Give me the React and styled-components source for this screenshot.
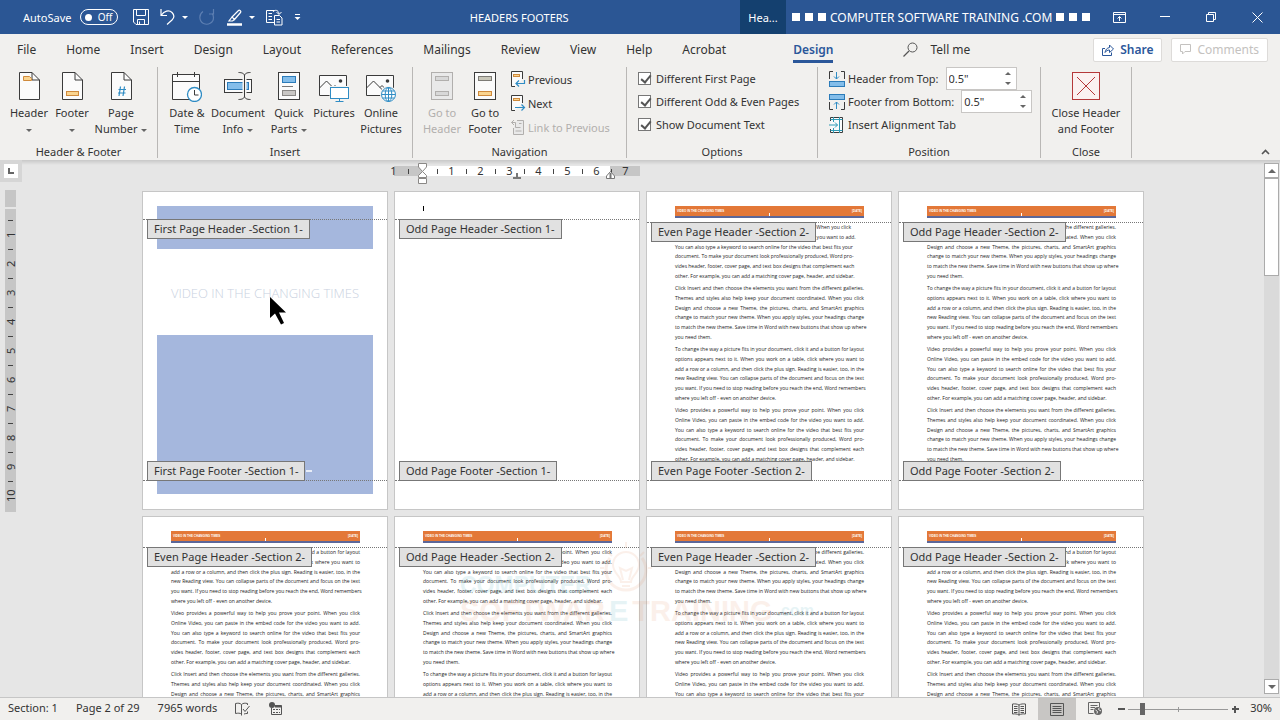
import styled, { createGlobalStyle, css } from 'styled-components';

const VIDEO = [
  'Video provides a powerful way to help you prove your point. When you click',
  'Online Video, you can paste in the embed code for the video you want to add.',
  'You can also type a keyword to search online for the video that best fits your',
  'document. To make your document look professionally produced, Word pro-',
  'vides header, footer, cover page, and text box designs that complement each',
  'other. For example, you can add a matching cover page, header, and sidebar.',
];

const INSERT = [
  'Click Insert and then choose the elements you want from the different galleries.',
  'Themes and styles also help keep your document coordinated. When you click',
  'Design and choose a new Theme, the pictures, charts, and SmartArt graphics',
  'change to match your new theme. When you apply styles, your headings change',
  'to match the new theme. Save time in Word with new buttons that show up where',
  'you need them.',
];

const LAYOUT = [
  'To change the way a picture fits in your document, click it and a button for layout',
  'options appears next to it. When you work on a table, click where you want to',
  'add a row or a column, and then click the plus sign. Reading is easier, too, in the',
  'new Reading view. You can collapse parts of the document and focus on the text',
  'you want. If you need to stop reading before you reach the end, Word remembers',
  'where you left off - even on another device.',
];

const textPages = [
  { kind: 'Even', footer: true, ragged: true, paragraphs: [VIDEO, INSERT, LAYOUT, VIDEO] },
  { kind: 'Odd', footer: true, paragraphs: [INSERT, LAYOUT, VIDEO, INSERT] },
  { kind: 'Even', paragraphs: [LAYOUT, VIDEO, INSERT.slice(0, 3)] },
  { kind: 'Odd', paragraphs: [VIDEO, INSERT, LAYOUT.slice(0, 3)] },
  { kind: 'Even', paragraphs: [INSERT, LAYOUT, VIDEO.slice(0, 3)] },
  { kind: 'Odd', paragraphs: [LAYOUT, VIDEO, INSERT.slice(0, 3)] },
];

const menuTabs = [
  'File',
  'Home',
  'Insert',
  'Design',
  'Layout',
  'References',
  'Mailings',
  'Review',
  'View',
  'Help',
  'Acrobat',
];

/* ---------- icons ---------- */

const Icon = ({ w, h, children, ...rest }) => (
  <svg width={w} height={h} viewBox={`0 0 ${w} ${h}`} fill="none" stroke="#3b3b3b" aria-hidden="true" {...rest}>
    {children}
  </svg>
);

const PageShape = () => (
  <>
    <path d="M.5.5H13L20.5 8V27.5H.5Z" fill="#fbfbfb" />
    <path d="M13 .5V8H20.5" />
  </>
);

const HeaderIcon = () => (
  <Icon w={21} h={28}>
    <PageShape />
    <path d="M4.500 4.500H10.500L12.500 6.500V8.500H4.500Z" fill="#fad48f" stroke="#cf8a3c" />
  </Icon>
);

const FooterIcon = () => (
  <Icon w={21} h={28}>
    <PageShape />
    <rect x="4.500" y="19.500" width="12" height="4" fill="#fad48f" stroke="#cf8a3c" />
  </Icon>
);

const PageNumberIcon = () => (
  <Icon w={21} h={28}>
    <PageShape />
    <path d="M9.500 14.500L8 24M13.500 14.500L12 24M7.500 17.500H15M7 21H14.500" stroke="#2f8cc4" strokeWidth="1.2" />
  </Icon>
);

const DateIcon = () => (
  <Icon w={30} h={30}>
    <path d="M.5 2.500H27.500V27.500H.5Z" fill="#fbfbfb" />
    <path d="M.5 9.500H27.500M5.500 0V5M22.500 0V5" />
    <circle cx="22.500" cy="22.500" r="7" fill="#fff" stroke="#2f8cc4" strokeWidth="1.3" />
    <path d="M22.500 18V23H26.500" />
  </Icon>
);

const DocInfoIcon = () => (
  <Icon w={28} h={28}>
    <rect x=".5" y="7.500" width="27" height="13" fill="#fbfbfb" />
    <rect x="3.500" y="10.500" width="21" height="7" fill="#83bdea" stroke="#2b7bb9" />
    <path d="M20.500 2V26" stroke="#f3f2f0" strokeWidth="4" />
    <path d="M14.500 .5C18 .5 20.500 1.500 20.500 4C20.500 1.500 23 .5 26.500 .5M20.500 4V24M14.500 27.500C18 27.500 20.500 26.500 20.500 24C20.500 26.500 23 27.500 26.500 27.500" />
  </Icon>
);

const QuickPartsIcon = () => (
  <Icon w={22} h={28}>
    <rect x=".5" y=".5" width="21" height="27" fill="#fbfbfb" />
    <rect x="4.500" y="4.500" width="13" height="6" fill="#83bdea" stroke="#2b7bb9" />
    <path d="M4 14.500H15" stroke="#777" />
    <rect x="4.500" y="18.500" width="13" height="5" fill="#c9c7c5" stroke="#8a8886" />
  </Icon>
);

const PhotoFrame = () => (
  <>
    <path d="M.5 3.500H27.500V23.500H.5Z" fill="#fbfbfb" />
    <path d="M.5 16L7.500 9L17 18.500M14 15.500L16 13.500L20 17.500" />
    <circle cx="21.500" cy="9" r="1.800" fill="#3b3b3b" stroke="none" />
  </>
);

const PicturesIcon = () => (
  <Icon w={30} h={30}>
    <PhotoFrame />
    <path d="M10.500 14H31V30H10.500Z" fill="#f3f2f0" stroke="none" />
    <rect x="11.500" y="15.500" width="18" height="11" fill="#fff" stroke="#2f8cc4" />
    <path d="M20.500 26.500V29.500M16.500 29.500H24.500" stroke="#2f8cc4" />
  </Icon>
);

const OnlinePicturesIcon = () => (
  <Icon w={30} h={30}>
    <PhotoFrame />
    <circle cx="22.500" cy="22.500" r="8.500" fill="#f3f2f0" stroke="none" />
    <g stroke="#2f8cc4">
      <circle cx="22.500" cy="22.500" r="7" fill="#fff" />
      <ellipse cx="22.500" cy="22.500" rx="3.300" ry="7" />
      <path d="M22.500 15.500V29.500M15.500 22.500H29.500M16.500 19H28.500M16.500 26H28.500" />
    </g>
  </Icon>
);

const GoToIcon = ({ disabled }) => (
  <Icon w={22} h={28} stroke={disabled ? '#b1afad' : '#3b3b3b'}>
    <rect x=".5" y=".5" width="21" height="27" fill={disabled ? '#e9e9e9' : '#fbfbfb'} />
    <rect x="4.500" y="4.500" width="13" height="4" fill={disabled ? '#d8d8d8' : '#c9c7b9'} stroke={disabled ? '#b1afad' : '#7d7b76'} />
    <rect x="4.500" y="19.500" width="13" height="4" fill={disabled ? '#d8d8d8' : '#fad48f'} stroke={disabled ? '#b1afad' : '#cf8a3c'} />
  </Icon>
);

const PreviousIcon = () => (
  <Icon w={15} h={17}>
    <path d="M4 15.500H.5V.5H11.500V8" fill="#fbfbfb" />
    <rect x="2.500" y="3.500" width="6" height="2" fill="#fad48f" stroke="#cf8a3c" />
    <path d="M13.500 9V12.500H5M8 9.500L5 12.500L8 15.500" stroke="#2f8cc4" strokeWidth="1.200" />
  </Icon>
);

const NextIcon = () => (
  <Icon w={15} h={17}>
    <path d="M4 15.500H.5V.5H11.500V8" fill="#fbfbfb" />
    <rect x="2.500" y="3.500" width="6" height="2" fill="#fad48f" stroke="#cf8a3c" />
    <path d="M4 12.500H13.500M10.500 9.500L13.500 12.500L10.500 15.500" stroke="#2f8cc4" strokeWidth="1.200" />
  </Icon>
);

const LinkIcon = () => (
  <Icon w={15} h={17} stroke="#b1afad">
    <path d="M6 1.500H12.500V15.500H2.500V9" fill="#e9e9e9" />
    <path d="M4.500 12H10.500M9.500 8.500H4.500V3.500H.5M3 1L.5 3.500L3 6M8 4.500H10.500" />
  </Icon>
);

const FromTopIcon = () => (
  <Icon w={16} h={16}>
    <path d="M.5 8V.5H4M12 .5H15.500V8" />
    <rect x=".5" y="10.500" width="15" height="5" fill="#83bdea" stroke="#2b7bb9" />
    <path d="M7.500 1V8M5 5.500L7.500 8L10 5.500" stroke="#2f8cc4" />
  </Icon>
);

const FromBottomIcon = () => (
  <Icon w={16} h={16}>
    <path d="M.5 8V15.500H4M12 15.500H15.500V8" />
    <rect x=".5" y=".5" width="15" height="5" fill="#83bdea" stroke="#2b7bb9" />
    <path d="M7.500 15V8M5 10.500L7.500 8L10 10.500" stroke="#2f8cc4" />
  </Icon>
);

const AlignTabIcon = () => (
  <Icon w={16} h={16}>
    <path d="M1.500 4V.5H13.500V15.500H1.500V12" fill="#fbfbfb" />
    <path d="M4.500 0V5M4.500 11V16M10.500 0V16M1.500 2.500H13.500M1.500 13.500H13.500M0 8H8.500M6 5.500L8.500 8L6 10.500" stroke="#2f9bb5" />
  </Icon>
);

const CloseRedIcon = () => (
  <Icon w={28} h={28} stroke="#b5383a">
    <rect x=".5" y=".5" width="27" height="27" fill="#fbf1f1" />
    <path d="M5 5L23 23M23 5L5 23" />
  </Icon>
);

const SaveIcon = () => (
  <Icon w={16} h={16} stroke="#fff">
    <path d="M.5.5H15.500V15.500H3L.5 13ZM3.500 .5V6.500H12.500V.5M4.500 15.500V10.500H11.500V15.500M6.500 12.500V15" />
  </Icon>
);

const UndoIcon = () => (
  <Icon w={16} h={16} stroke="#fff" strokeWidth="1.200">
    <path d="M1 0V6.500H7M1.500 6C4 2 9 .5 12 3.500C14.500 6 14 9 12 11L7 15.500" />
  </Icon>
);

const RedoIcon = () => (
  <Icon w={16} h={16} stroke="#5d7fb2" strokeWidth="1.200">
    <path d="M14.500 0V5H10M4 2.500C-.5 5.500 0 12 4.500 14.500C9 16.500 14.500 14 14.500 8.500C14.500 7 14 5.500 13 4.500" />
  </Icon>
);

const PenIcon = () => (
  <Icon w={17} h={17} stroke="#fff">
    <path d="M6 8L12.500 1.500C13.500 .5 15.500 2.500 14.500 3.500L8.500 10.500ZM6 8L3 12H6.500L8.500 10.500" strokeWidth="1.200" />
    <path d="M1 15.500H16" strokeWidth="2.500" />
  </Icon>
);

const CompareIcon = () => (
  <Icon w={17} h={17} stroke="#fff">
    <path d="M8 13.500H.5V1.500H8.500M2.500 4.500H6M2.500 7.500H6M2.500 10.500H6" />
    <path d="M8.500 6.500H13.500L16 9V16H8.500ZM10.500 10.500H14M10.500 13H14" />
    <path d="M7 3C8.500 .5 12.500 .5 13 5M10.500 3L13 5.500L15.500 3" />
  </Icon>
);

const CustomizeIcon = () => (
  <Icon w={7} h={8} stroke="#fff">
    <path d="M1 1.500H6" />
    <path d="M.5 4H6.500L3.500 7Z" fill="#fff" stroke="none" />
  </Icon>
);

const RibbonModeIcon = () => (
  <Icon w={13} h={11} stroke="#fff">
    <path d="M.5.5H12.500V10.500H.5ZM.5 2.500H12.500M6.500 9V4.500M4.500 6.500L6.500 4.500L8.500 6.500" />
  </Icon>
);

const MinimizeIcon = () => (
  <Icon w={10} h={10} stroke="#fff">
    <path d="M0 4.500H10" />
  </Icon>
);

const RestoreIcon = () => (
  <Icon w={10} h={10} stroke="#fff">
    <path d="M.5 2.500H7.500V9.500H.5ZM2.500 2.500V.5H9.500V7.500H7.500" />
  </Icon>
);

const CloseIcon = () => (
  <Icon w={11} h={11} stroke="#fff">
    <path d="M.5.5L10.500 10.500M10.500 .5L.5 10.500" />
  </Icon>
);

const SearchIcon = () => (
  <Icon w={15} h={15} stroke="#555">
    <circle cx="9.500" cy="5.500" r="4.500" />
    <path d="M6 9L.5 14.500" strokeWidth="1.200" />
  </Icon>
);

const ShareIcon = () => (
  <Icon w={12} h={12} stroke="#2b579a">
    <path d="M3 4.500H.5V11.500H9.500V8.500M3 8.500C3.500 5.500 5 4 7.500 3.500V1L11.500 5L7.500 8.500V6C5.500 6 4 7 3 8.500Z" />
  </Icon>
);

const CommentIcon = () => (
  <Icon w={11} h={11} stroke="#c4c2c0">
    <path d="M.5.5H10.500V7.500H5L2.500 10V7.500H.5Z" />
  </Icon>
);

const CollapseIcon = () => (
  <Icon w={9} h={6} stroke="#555">
    <path d="M1 5L4.500 1.500L8 5" strokeWidth="1.600" />
  </Icon>
);

const CursorIcon = () => (
  <Icon w={17} h={28} stroke="none">
    <path d="M0 0V21L5 16.500L11 27.500L14 26L9 15.500H16Z" fill="#000" />
  </Icon>
);

const IndentIcon = () => (
  <Icon w={9} h={22} stroke="#8a8886">
    <path d="M.5.5H8.500V4L4.500 8.500L.5 4ZM.5 14.500V12.500L4.500 8.500L8.500 12.500V14.500ZM.5 15.500H8.500V20.500H.5Z" fill="#fff" />
  </Icon>
);

const RightIndentIcon = () => (
  <Icon w={9} h={9} stroke="#777">
    <path d="M.5 7.500V5L4.500 .5L8.500 5V7.500Z" fill="#fff" />
    <path d="M4.500 2V8" strokeWidth="2" />
  </Icon>
);

const CenterTabIcon = () => (
  <Icon w={8} h={6} stroke="#777">
    <path d="M0 5H8M4 0V5" strokeWidth="2" />
  </Icon>
);

const ProofIcon = () => (
  <Icon w={16} h={14} stroke="#555">
    <path d="M6.500 12C5 11 3 11 .5 11.500V1.500C3 1 5 1 6.500 2.500V13.500M6.500 2.500C8 1 10 1 12.500 1.500V3M9 12C10 11.500 11.500 11.500 12.500 11.500V9.500M8 7L10 9.500L14.500 4" />
  </Icon>
);

const MacroIcon = () => (
  <Icon w={14} h={14} stroke="#555">
    <path d="M2.500 6V12.500H12.500V3.500H6" />
    <path d="M6 4.500H12.500" strokeWidth="2" />
    <path d="M4 7.500H11M4 10.500H11" strokeDasharray="2 1" />
    <circle cx="3" cy="3" r="3" fill="#555" stroke="none" />
  </Icon>
);

const ReadIcon = () => (
  <Icon w={14} h={13} stroke="#555">
    <path d="M7 2V12.500M7 2C5 .8 3 .8 .5 1V11C3 10.800 5 10.800 7 12C9 10.800 11 10.800 13.500 11V1C11 .8 9 .8 7 2ZM2 3.500H5.500M2 5.500H5.500M2 7.500H5.500M2 9.500H5.500M8.500 3.500H12M8.500 5.500H12M8.500 7.500H12M8.500 9.500H12" />
  </Icon>
);

const PrintIcon = () => (
  <Icon w={14} h={13} stroke="#555">
    <path d="M.5.5H13.500V12.500H.5ZM2.500 3.500H11.500M2.500 5.500H11.500M2.500 7.500H11.500M2.500 9.500H11.500" />
  </Icon>
);

const WebIcon = () => (
  <Icon w={15} h={14} stroke="#666">
    <path d="M5.500 11.500H.5V.5H11.500V5M2.500 3.500H9.500M2.500 5.500H7M2.500 7.500H5.500" />
    <circle cx="10" cy="9" r="4" fill="#666" stroke="none" />
    <path d="M7.500 8L9.500 9.500L9 11.500M11 6L10.500 7.500L13 9" stroke="#f1f0ee" />
  </Icon>
);

const BulbMark = () => (
  <Icon w={56} h={62} stroke="#e58a5c">
    <path d="M12 16A20 20 0 1 0 44 16" strokeWidth="3" />
    <path d="M23 40C23 34 15 31 15 23A13 13 0 0 1 41 23C41 31 33 34 33 40ZM28 6V0M10 10L14 14M46 10L42 14M2 26H6M50 26H54M25 38L22 26L28 29L34 26L31 38M24 44H32" strokeWidth="2" />
  </Icon>
);

/* ---------- page ---------- */

const TextPage = ({ kind, footer, ragged, paragraphs }) => (
  <Sheet>
    <Band>
      <span>VIDEO IN THE CHANGING TIMES</span>
      <span>[DATE]</span>
    </Band>
    <DocBody>
      {paragraphs.map((lines, i) => (
        <Paragraph key={i} $ragged={ragged && i === 0}>
          {lines.map((line, n) => (
            <Line key={line} $last={n === 5}>{line}</Line>
          ))}
        </Paragraph>
      ))}
    </DocBody>
    <HeaderMark $section={2}>
      <MarkLabel>{kind} Page Header -Section 2-</MarkLabel>
    </HeaderMark>
    {footer && (
      <FooterMark>
        <MarkLabel>{kind} Page Footer -Section 2-</MarkLabel>
      </FooterMark>
    )}
  </Sheet>
);

const BigButton = ({ icon, lines, arrow, w, disabled }) => (
  <StyledBigButton $w={w} disabled={disabled}>
    <BigIcon>{icon}</BigIcon>
    <span>{lines[0]}</span>
    <span>
      {lines[1]}
      {arrow && <Caret $spaced={!!lines[1]} />}
    </span>
  </StyledBigButton>
);

const Spin = ({ id, label, icon }) => (
  <FieldRow>
    {icon}
    <label htmlFor={id}>{label}</label>
    <SpinBox>
      <input id={id} defaultValue={'0.5"'} />
      <SpinButtons>
        <button aria-label={`Increase ${label}`}>
          <Caret $up />
        </button>
        <button aria-label={`Decrease ${label}`}>
          <Caret />
        </button>
      </SpinButtons>
    </SpinBox>
  </FieldRow>
);

function App() {
  return (
    <Window>
      <GlobalStyle />
      <TitleBar>
        <QuickAccess>
          <span>AutoSave</span>
          <Toggle role="switch" aria-checked="false" aria-label="AutoSave">
            <i />
            Off
          </Toggle>
          <QuickButton aria-label="Save"><SaveIcon /></QuickButton>
          <QuickButton aria-label="Undo"><UndoIcon /><Caret $light /></QuickButton>
          <QuickButton aria-label="Redo"><RedoIcon /></QuickButton>
          <QuickButton aria-label="Highlight"><PenIcon /><Caret $light /></QuickButton>
          <QuickButton aria-label="Compare"><CompareIcon /></QuickButton>
          <QuickButton aria-label="Customize"><CustomizeIcon /></QuickButton>
        </QuickAccess>
        <DocTitle>HEADERS FOOTERS</DocTitle>
        <ContextTab>Hea...</ContextTab>
        <Account>
          <Squares><i /><i /><i /></Squares>
          COMPUTER SOFTWARE TRAINING .COM
          <Squares><i /><i /><i /></Squares>
        </Account>
        <WindowButton aria-label="Ribbon display options"><RibbonModeIcon /></WindowButton>
        <WindowButton aria-label="Minimize"><MinimizeIcon /></WindowButton>
        <WindowButton aria-label="Restore"><RestoreIcon /></WindowButton>
        <WindowButton aria-label="Close"><CloseIcon /></WindowButton>
      </TitleBar>

      <TabBar>
        <Tabs>
          {menuTabs.map((tab) => (
            <Tab key={tab}>{tab}</Tab>
          ))}
        </Tabs>
        <Tab $active>Design</Tab>
        <TellMe>
          <SearchIcon />
          Tell me
        </TellMe>
        <TabActions>
          <ActionButton>
            <ShareIcon />
            Share
          </ActionButton>
          <ActionButton disabled>
            <CommentIcon />
            Comments
          </ActionButton>
        </TabActions>
      </TabBar>

      <Ribbon>
        <Group $w={158}>
          <Tools $pad={8}>
            <BigButton w={42} icon={<HeaderIcon />} lines={['Header']} arrow />
            <BigButton w={44} icon={<FooterIcon />} lines={['Footer']} arrow />
            <BigButton w={54} icon={<PageNumberIcon />} lines={['Page', 'Number']} arrow />
          </Tools>
          <GroupName>Header &amp; Footer</GroupName>
        </Group>
        <Group $w={255}>
          <Tools $pad={6}>
            <BigButton w={46} icon={<DateIcon />} lines={['Date &', 'Time']} />
            <BigButton w={56} icon={<DocInfoIcon />} lines={['Document', 'Info']} arrow />
            <BigButton w={46} icon={<QuickPartsIcon />} lines={['Quick', 'Parts']} arrow />
            <BigButton w={44} icon={<PicturesIcon />} lines={['Pictures']} />
            <BigButton w={50} icon={<OnlinePicturesIcon />} lines={['Online', 'Pictures']} />
          </Tools>
          <GroupName>Insert</GroupName>
        </Group>
        <Group $w={214}>
          <Tools $pad={8}>
            <BigButton w={42} icon={<GoToIcon disabled />} lines={['Go to', 'Header']} disabled />
            <BigButton w={44} icon={<GoToIcon />} lines={['Go to', 'Footer']} />
            <NavList>
              <SmallButton><PreviousIcon />Previous</SmallButton>
              <SmallButton><NextIcon />Next</SmallButton>
              <SmallButton disabled><LinkIcon />Link to Previous</SmallButton>
            </NavList>
          </Tools>
          <GroupName>Navigation</GroupName>
        </Group>
        <Group $w={191}>
          <Tools $pad={11}>
            <FieldList>
              <CheckRow><input type="checkbox" defaultChecked />Different First Page</CheckRow>
              <CheckRow><input type="checkbox" defaultChecked />Different Odd &amp; Even Pages</CheckRow>
              <CheckRow><input type="checkbox" defaultChecked />Show Document Text</CheckRow>
            </FieldList>
          </Tools>
          <GroupName>Options</GroupName>
        </Group>
        <Group $w={223}>
          <Tools $pad={11}>
            <FieldList>
              <Spin id="from-top" label="Header from Top:" icon={<FromTopIcon />} />
              <Spin id="from-bottom" label="Footer from Bottom:" icon={<FromBottomIcon />} />
              <FieldButton><AlignTabIcon />Insert Alignment Tab</FieldButton>
            </FieldList>
          </Tools>
          <GroupName>Position</GroupName>
        </Group>
        <Group $w={91}>
          <Tools $pad={4}>
            <BigButton w={82} icon={<CloseRedIcon />} lines={['Close Header', 'and Footer']} />
          </Tools>
          <GroupName>Close</GroupName>
        </Group>
        <Collapse aria-label="Collapse ribbon"><CollapseIcon /></Collapse>
      </Ribbon>

      <Workspace>
        <LeftRail>
          <TabSelector aria-label="Tab selector"><i /></TabSelector>
          <VRuler>
            <VMargin />
            {[1, 2, 3, 4, 5, 6, 7, 8, 9, 10].map((n) => (
              <VCell key={n}>{n}</VCell>
            ))}
          </VRuler>
        </LeftRail>
        <Canvas>
          <PagesWrap>
            <HRuler>
              {['1', '', '1', '2', '3', '4', '5', '6', '7'].map((n, i) => (
                <HCell key={i} $first={i === 0}>{n}</HCell>
              ))}
              <Marker $x={40} $y={-3}><IndentIcon /></Marker>
              <Marker $x={135} $y={7}><CenterTabIcon /></Marker>
              <Marker $x={228} $y={5}><RightIndentIcon /></Marker>
            </HRuler>
            <Pages>
              <Sheet>
                <Cover>
                  <CoverTop />
                  <CoverTitle>VIDEO IN THE CHANGING TIMES</CoverTitle>
                  <CoverBottom><i /></CoverBottom>
                </Cover>
                <HeaderMark>
                  <MarkLabel>First Page Header -Section 1-</MarkLabel>
                </HeaderMark>
                <FooterMark>
                  <MarkLabel>First Page Footer -Section 1-</MarkLabel>
                </FooterMark>
                <Pointer><CursorIcon /></Pointer>
              </Sheet>
              <Sheet>
                <TextCaret />
                <HeaderMark>
                  <MarkLabel>Odd Page Header -Section 1-</MarkLabel>
                </HeaderMark>
                <FooterMark>
                  <MarkLabel>Odd Page Footer -Section 1-</MarkLabel>
                </FooterMark>
              </Sheet>
              {textPages.map((page, i) => (
                <TextPage key={i} {...page} />
              ))}
            </Pages>
            <Watermark>
              <MarkTop>COMPUTER</MarkTop>
              <MarkRow>
                <span>SOFTWAR</span>
                <b>E</b>
                <span>TRAINING</span>
                <em>.com</em>
              </MarkRow>
              <Bulb><BulbMark /></Bulb>
            </Watermark>
          </PagesWrap>
        </Canvas>
        <ScrollBar>
          <ScrollButton aria-label="Scroll up"><Caret $up $big /></ScrollButton>
          <Thumb />
          <ScrollButton aria-label="Scroll down"><Caret $big /></ScrollButton>
        </ScrollBar>
      </Workspace>

      <StatusBar>
        <StatusText>Section: 1</StatusText>
        <StatusText>Page 2 of 29</StatusText>
        <StatusText>7965 words</StatusText>
        <ProofIcon />
        <MacroIcon />
        <StatusRight>
          <ViewButton aria-label="Read mode"><ReadIcon /></ViewButton>
          <ViewButton $active aria-label="Print layout"><PrintIcon /></ViewButton>
          <ViewButton aria-label="Web layout"><WebIcon /></ViewButton>
          <ZoomStep aria-label="Zoom out" />
          <ZoomSlider type="range" aria-label="Zoom" min="10" max="190" defaultValue="32" />
          <ZoomStep $plus aria-label="Zoom in" />
          <ZoomValue>30%</ZoomValue>
        </StatusRight>
      </StatusBar>
    </Window>
  );
}

export default App;

const GlobalStyle = createGlobalStyle`
  * {
    box-sizing: border-box;
  }

  body {
    margin: 0;
    overflow: hidden;
  }

  body, button, input {
    font-family: 'Noto Sans', 'Open Sans', sans-serif;
    font-size: 11px;
    color: #333;
  }

  button {
    margin: 0;
    padding: 0;
    border: none;
    background: none;
  }

  svg {
    display: block;
    flex-shrink: 0;
  }
`;

const Window = styled.div`
  height: 100vh;
  display: flex;
  flex-direction: column;
  background-color: #e6e6e6;
  white-space: nowrap;
`;

const TitleBar = styled.header`
  height: 34px;
  display: flex;
  align-items: center;
  background-color: #2b5694;
  color: #fff;
`;

const QuickAccess = styled.div`
  padding-left: 23px;
  display: flex;
  align-items: center;
`;

const Toggle = styled.button`
  width: 38px;
  height: 16px;
  margin: 0 15px 0 9px;
  padding: 0 5px 0 4px;
  display: flex;
  align-items: center;
  justify-content: space-between;
  border: 1px solid #fff;
  border-radius: 8px;
  color: #fff;
  font-size: 10px;

  i {
    width: 7px;
    height: 7px;
    border-radius: 50%;
    background-color: #fff;
  }
`;

const QuickButton = styled.button`
  margin-right: 11px;
  display: flex;
  align-items: center;
  gap: 6px;
`;

const Caret = styled.i`
  width: 0;
  height: 0;
  display: inline-block;
  vertical-align: middle;
  border: ${({ $big }) => ($big ? 4 : 3)}px solid transparent;
  border-top-color: ${({ $light }) => ($light ? '#fff' : '#666')};
  border-bottom-width: 0;
  margin-left: ${({ $spaced }) => ($spaced ? 4 : 0)}px;

  ${({ $up }) =>
    $up &&
    css`
      transform: rotate(180deg);
    `}
`;

const DocTitle = styled.div`
  flex: 1;
  padding-right: 14px;
  text-align: center;
`;

const ContextTab = styled.div`
  width: 46px;
  height: 100%;
  display: flex;
  align-items: center;
  justify-content: center;
  background-color: #14406f;
`;

const Account = styled.div`
  width: 310px;
  padding-left: 6px;
  display: flex;
  align-items: center;
  gap: 4px;
  font-size: 12px;
`;

const Squares = styled.span`
  display: flex;
  gap: 5px;

  i {
    width: 8px;
    height: 8px;
    background-color: #fff;
  }
`;

const WindowButton = styled.button`
  width: 46px;
  height: 100%;
  display: flex;
  align-items: center;
  justify-content: center;
`;

const TabBar = styled.nav`
  height: 31px;
  padding: 0 12px 0 17px;
  display: flex;
  align-items: center;
  background-color: #f1f0ee;
`;

const Tabs = styled.div`
  display: flex;
  gap: 30px;
  margin-right: 67px;
`;

const Tab = styled.button`
  height: 26px;
  padding-top: 2px;
  font-size: 12px;
  border-bottom: 3px solid transparent;

  ${({ $active }) =>
    $active &&
    css`
      color: #2b579a;
      font-weight: 600;
      border-bottom-color: #2b579a;
    `}
`;

const TellMe = styled.button`
  margin-left: 70px;
  display: flex;
  align-items: center;
  gap: 12px;
  font-size: 12px;
`;

const TabActions = styled.div`
  margin-left: auto;
  display: flex;
  gap: 9px;
`;

const ActionButton = styled.button`
  height: 24px;
  padding: 0 8px;
  display: flex;
  align-items: center;
  gap: 6px;
  border: 1px solid #dddbd9;
  border-radius: 2px;
  background-color: #fff;
  color: #2b579a;
  font-size: 12px;
  font-weight: 600;

  &:disabled {
    color: #c4c2c0;
    font-weight: 400;
  }
`;

const Ribbon = styled.section`
  height: 95px;
  display: flex;
  align-items: flex-start;
  background-color: #f1f0ee;
`;

const Group = styled.div`
  width: ${({ $w }) => $w}px;
  height: 91px;
  margin-top: 2px;
  display: flex;
  flex-direction: column;
  justify-content: space-between;
  border-right: 1px solid #b9b7b5;
`;

const Tools = styled.div`
  padding-left: ${({ $pad }) => $pad}px;
  display: flex;
`;

const GroupName = styled.div`
  line-height: 12px;
  text-align: center;
`;

const StyledBigButton = styled.button`
  width: ${({ $w }) => $w}px;
  padding-top: 5px;
  display: flex;
  flex-direction: column;
  align-items: center;
  line-height: 16px;

  &:disabled {
    color: #b1afad;
  }
`;

const BigIcon = styled.span`
  height: 33px;
`;

const NavList = styled.div`
  margin-left: 4px;
`;

const SmallButton = styled.button`
  height: 24px;
  display: flex;
  align-items: center;
  gap: 2px;

  &:disabled {
    color: #b1afad;
  }
`;

const FieldList = styled.div`
  display: flex;
  flex-direction: column;
  align-items: flex-start;
`;

const fieldRow = css`
  height: 23px;
  display: flex;
  align-items: center;
  gap: 3px;
`;

const FieldRow = styled.div`
  ${fieldRow}
`;

const FieldButton = styled.button`
  ${fieldRow}
`;

const CheckRow = styled.label`
  ${fieldRow}
  gap: 5px;

  input {
    appearance: none;
    position: relative;
    width: 13px;
    height: 13px;
    margin: 0;
    border: 1px solid #777;
    background-color: #fff;
  }

  input:checked::after {
    content: '';
    position: absolute;
    left: 4px;
    top: 0;
    width: 4px;
    height: 8px;
    border: solid #555;
    border-width: 0 2px 2px 0;
    transform: rotate(40deg);
  }
`;

const SpinBox = styled.div`
  width: 71px;
  height: 23px;
  margin-left: 4px;
  display: flex;
  border: 1px solid #c8c6c4;
  background-color: #fff;

  input {
    flex: 1;
    min-width: 0;
    padding: 0 2px;
    border: none;
    outline: none;
    background: none;
  }
`;

const SpinButtons = styled.div`
  width: 16px;
  display: flex;
  flex-direction: column;

  button {
    flex: 1;
    display: flex;
    align-items: center;
    justify-content: center;
  }
`;

const Collapse = styled.button`
  align-self: flex-end;
  margin: 0 10px 5px auto;
`;

const Workspace = styled.main`
  flex: 1;
  min-height: 0;
  display: flex;
  overflow: hidden;
  background: linear-gradient(#c8c8c8, #e6e6e6 5px);
`;

const LeftRail = styled.div`
  width: 22px;
  display: flex;
  flex-direction: column;
  gap: 8px;
`;

const TabSelector = styled.button`
  width: 22px;
  height: 22px;
  border: 4px solid #d6d6d6;
  background-color: #fff;
  display: flex;
  align-items: center;
  justify-content: center;

  i {
    width: 6px;
    height: 6px;
    border: solid #666;
    border-width: 0 0 2px 2px;
  }
`;

const VRuler = styled.div`
  width: 11px;
  margin-left: 5px;
  padding-bottom: 2px;
  background-color: #c6c6c6;
  font-size: 11px;
`;

const VMargin = styled.div`
  height: 30px;
  padding-top: 17px;

  &::before {
    content: '';
    display: block;
    height: 2px;
    background-color: #e6e6e6;
  }
`;

const VCell = styled.div`
  height: 29px;
  line-height: 11px;
  text-align: center;
  writing-mode: vertical-rl;
  transform: rotate(180deg);
  background: linear-gradient(#444, #444) center bottom / 5px 1px no-repeat;
`;

const Canvas = styled.div`
  flex: 1;
  display: flex;
  justify-content: center;
`;

const PagesWrap = styled.div`
  position: relative;
`;

const HRuler = styled.div`
  position: relative;
  width: 262px;
  height: 10px;
  margin: 6px 0 15px 236px;
  padding-left: 1px;
  display: grid;
  grid-template-columns: repeat(9, 29px);
  background: linear-gradient(to right, transparent 16px, #c6c6c6 16px 44px, #fff 44px 232px, #c6c6c6 232px);
  font-size: 11px;
`;

const HCell = styled.div`
  line-height: 10px;
  text-align: center;
  background: linear-gradient(#444, #444) left center / 1px ${({ $first }) => ($first ? 0 : 5)}px no-repeat;
`;

const Marker = styled.span`
  position: absolute;
  left: ${({ $x }) => $x}px;
  top: ${({ $y }) => $y}px;
`;

const Pages = styled.div`
  display: grid;
  grid-template-columns: repeat(4, 246px);
  grid-auto-rows: 319px;
  gap: 6px;
`;

const Sheet = styled.article`
  position: relative;
  padding: 14px 27px 0 28px;
  border: 1px solid #c6c6c6;
  background-color: #fff;
`;

const Band = styled.div`
  height: 12px;
  padding: 0 2px;
  display: flex;
  justify-content: space-between;
  border-bottom: 2px solid #5c6799;
  background:
    linear-gradient(#fff, #fff) center bottom / 1px 3px no-repeat,
    #e37838;
  color: #fff;
  font-family: 'Liberation Sans', sans-serif;
  font-size: 3px;
  font-weight: 700;
  line-height: 10px;
`;

const DocBody = styled.div`
  margin-top: 5px;
  display: flex;
  flex-direction: column;
  gap: 3px;
  font-family: 'Open Sans', sans-serif;
  font-size: 5px;
  color: #222;
`;

const Paragraph = styled.div`
  height: 58px;
  display: grid;
  grid-template-columns: minmax(0, 1fr);
  grid-template-rows: repeat(6, 1fr);
  align-items: center;
  text-align-last: ${({ $ragged }) => ($ragged ? 'left' : 'justify')};
`;

const Line = styled.div`
  line-height: 9px;
  text-align-last: ${({ $last }) => ($last ? 'left' : 'inherit')};
`;

const markLine = css`
  position: absolute;
  left: 0;
  right: 0;
  height: 20px;
  padding-left: 4px;
  display: flex;
`;

const HeaderMark = styled.div`
  ${markLine}
  top: ${({ $section }) => ($section === 2 ? 30 : 27)}px;
  border-top: 1px dotted #777;

  & > span {
    margin-top: -1px;
  }
`;

const FooterMark = styled.div`
  ${markLine}
  top: 269px;
  border-bottom: 1px dotted #777;
`;

const MarkLabel = styled.span`
  height: 20px;
  padding: 0 6px;
  border: 1px solid #777;
  background-color: #e1e1e1;
  line-height: 17px;
`;

const Cover = styled.div`
  width: 216px;
  margin-left: -14px;
`;

const CoverTop = styled.div`
  height: 43px;
  background-color: #a5b7dd;
`;

const CoverTitle = styled.h1`
  height: 86px;
  margin: 0;
  color: #c9d1e0;
  font-family: 'Open Sans', sans-serif;
  font-size: 13px;
  font-weight: 300;
  line-height: 88px;
  text-align: center;
`;

const CoverBottom = styled.div`
  height: 159px;
  padding: 135px 0 0 149px;
  background-color: #a5b7dd;

  i {
    width: 6px;
    height: 2px;
    display: block;
    background-color: #e8edf7;
  }
`;

const Pointer = styled.div`
  position: absolute;
  left: 127px;
  top: 105px;
`;

const TextCaret = styled.div`
  width: 1px;
  height: 5px;
  background-color: #000;
`;

const Watermark = styled.div`
  position: absolute;
  left: 318px;
  top: 412px;
  opacity: 0.12;
  font-family: 'Liberation Sans', sans-serif;
  font-size: 29px;
  font-weight: 700;
  line-height: 26px;
  color: #e58a5c;
  pointer-events: none;
`;

const MarkTop = styled.div`
  color: #3aa5b5;
  font-size: 23px;
`;

const MarkRow = styled.div`
  display: flex;
  gap: 4px;

  b {
    color: #3aa5b5;
  }

  em {
    color: #3aa5b5;
    font-size: 16px;
    font-style: normal;
  }
`;

const Bulb = styled.div`
  position: absolute;
  left: 138px;
  top: -30px;
`;

const ScrollBar = styled.div`
  width: 15px;
  margin: 3px 1px 3px 0;
  display: flex;
  flex-direction: column;
  background-color: #dadada;
`;

const ScrollButton = styled.button`
  height: 15px;
  display: flex;
  align-items: center;
  justify-content: center;
  border: 1px solid #ababab;
  background-color: #fff;
`;

const Thumb = styled.div`
  height: 98px;
  margin-bottom: auto;
  border: 1px solid #ababab;
  background-color: #fff;
`;

const StatusBar = styled.footer`
  height: 23px;
  padding: 0 8px;
  display: flex;
  align-items: center;
  gap: 18px;
  border-top: 1px solid #c6c6c6;
  background-color: #f1f0ee;
`;

const StatusText = styled.span`
  padding-bottom: 4px;
`;

const StatusRight = styled.div`
  height: 100%;
  margin-left: auto;
  display: flex;
  align-items: center;
`;

const ViewButton = styled.button`
  width: 38px;
  height: 100%;
  display: flex;
  align-items: center;
  justify-content: center;
  background-color: ${({ $active }) => ($active ? '#c8c6c4' : 'transparent')};
`;

const ZoomStep = styled.button`
  width: 14px;
  height: 14px;
  background:
    linear-gradient(#555, #555) center / 7px 2px no-repeat,
    linear-gradient(#555, #555) center / 2px ${({ $plus }) => ($plus ? 7 : 0)}px no-repeat;
`;

const ZoomSlider = styled.input`
  appearance: none;
  width: 100px;
  height: 14px;
  margin: 0;
  background:
    linear-gradient(#999, #999) center / 100% 1px no-repeat,
    linear-gradient(#999, #999) center / 1px 5px no-repeat;

  &::-webkit-slider-thumb {
    appearance: none;
    width: 5px;
    height: 12px;
    background-color: #666;
  }
`;

const ZoomValue = styled(StatusText)`
  width: 30px;
  text-align: right;
`;
